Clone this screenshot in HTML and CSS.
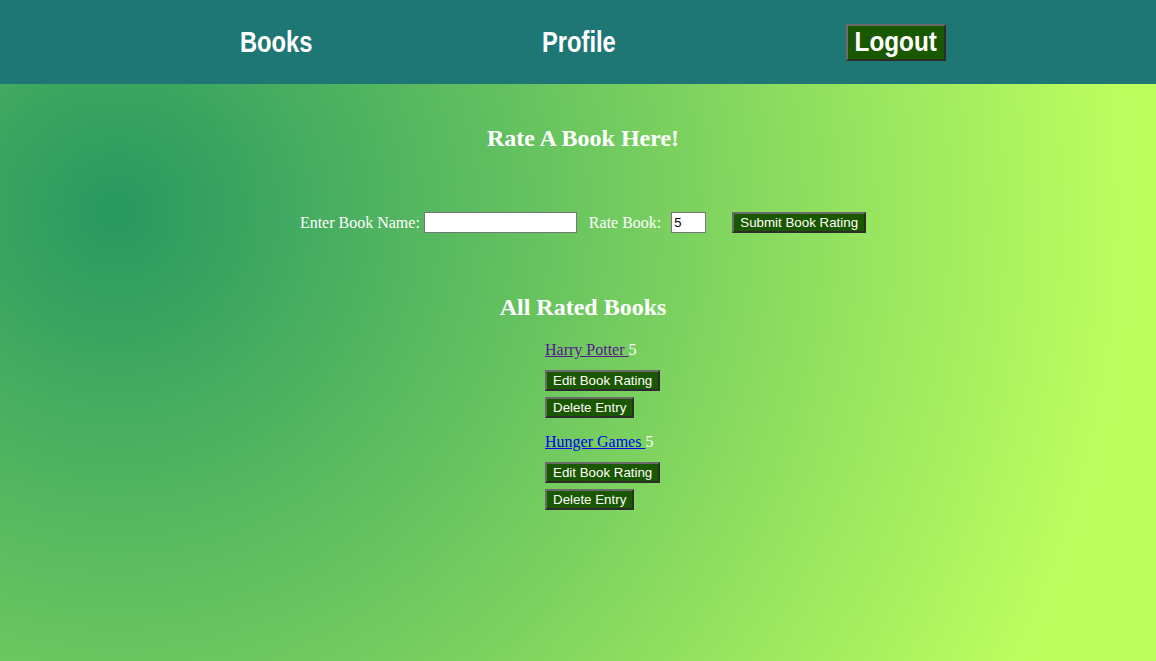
FILE: index.html
```html
<!DOCTYPE html>
<html>
<head>
<meta charset="utf-8">
<title>Rate Books</title>
<link rel="stylesheet" href="styles.css">
</head>
<body>
<header class="topbar">
  <nav class="nav">
    <a class="nav-link" href="#"><span class="cond">Books</span></a>
    <a class="nav-link" href="#"><span class="cond">Profile</span></a>
    <div class="nav-cell"><button class="logout"><span class="cond-sm">Logout</span></button></div>
  </nav>
</header>
<main class="main">
  <h2 class="title">Rate A Book Here!</h2>
  <form class="rate-form">
    <label class="lbl">Enter Book Name: <input class="name-input" type="text"></label>
    <label class="lbl rate-lbl">Rate Book: <input class="rate-input" type="text" value="5"></label>
    <button class="btn submit" type="button">Submit Book Rating</button>
  </form>
  <h2 class="title list-title">All Rated Books</h2>
  <div class="book-list">
    <div class="book">
      <p class="book-line"><a class="visited" href="#">Harry Potter </a>5</p>
      <div class="actions">
        <button class="btn">Edit Book Rating</button>
        <button class="btn">Delete Entry</button>
      </div>
    </div>
    <div class="book">
      <p class="book-line"><a class="unvisited" href="#">Hunger Games </a>5</p>
      <div class="actions">
        <button class="btn">Edit Book Rating</button>
        <button class="btn">Delete Entry</button>
      </div>
    </div>
  </div>
</main>
</body>
</html>
```
FILE: styles.css
```css
html, body {
  margin: 0;
  padding: 0;
  height: 100%;
}
body {
  font-family: "Liberation Serif", "Times New Roman", serif;
  font-size: 16px;
  color: #fff;
  display: flex;
  flex-direction: column;
  background: #62c35f;
}
.topbar {
  background: #1e7774;
  height: 84px;
  flex: none;
}
.nav {
  display: grid;
  grid-template-columns: 302px 304px 304px;
  padding-left: 240px;
  height: 100%;
  align-items: center;
}
.nav-link {
  color: #fff;
  text-decoration: none;
  font-family: "Liberation Sans", Arial, sans-serif;
  font-weight: bold;
  font-size: 30px;
}
.cond {
  display: inline-block;
  transform: scaleX(0.79);
  transform-origin: left center;
}
.nav-cell {
  display: flex;
  align-items: center;
}
.logout {
  background: #1a5800;
  color: #fff;
  font-family: "Liberation Sans", Arial, sans-serif;
  font-weight: bold;
  font-size: 27px;
  border: 2px solid;
  border-color: #6a6a6a #2c2c2c #2c2c2c #6a6a6a;
  width: 100px;
  height: 37px;
  padding: 0;
  display: flex;
  align-items: center;
  justify-content: center;
  margin-top: 1px;
}
.cond-sm {
  display: inline-block;
  transform: scaleX(0.9);
  line-height: 1;
}
.main {
  flex: 1;
  background: radial-gradient(circle at 10% 22%, rgb(40, 152, 96) 0%, rgb(190, 255, 95) 90%);
  padding: 40px 0 0 10px;
  text-align: center;
}
.title {
  font-size: 24px;
  font-weight: bold;
  margin: 0;
  line-height: 28px;
}
.rate-form {
  margin-top: 60px;
  display: flex;
  justify-content: center;
  align-items: center;
  height: 21px;
}
.lbl {
  display: flex;
  align-items: center;
  white-space: pre;
}
.rate-lbl {
  margin-left: 12px;
}
.name-input, .rate-input {
  box-sizing: border-box;
  height: 21px;
  border: 1px solid #767676;
  background: #fff;
  font-family: "Liberation Sans", Arial, sans-serif;
  font-size: 13px;
  padding: 1px 2px;
  margin: 0;
}
.name-input {
  width: 153px;
}
.rate-input {
  width: 35px;
  margin-left: 6px;
}
.submit {
  margin-left: 26px;
}
.btn {
  box-sizing: border-box;
  height: 21px;
  background: #1a5800;
  color: #fff;
  font-family: "Liberation Sans", Arial, sans-serif;
  font-size: 13.33px;
  padding: 0 6px;
  border: 2px solid;
  border-color: #6a6a6a #2c2c2c #2c2c2c #6a6a6a;
  line-height: 15px;
}
.list-title {
  margin-top: 60px;
}
.book-list {
  margin-top: 20px;
  margin-left: calc(50% - 38px);
  display: flex;
  flex-direction: column;
  gap: 15px;
  text-align: left;
}
.book-line {
  margin: 0;
  line-height: 18px;
}
.visited { color: #551a8b; }
.unvisited { color: #0000ee; }
.actions {
  margin-top: 11px;
  display: flex;
  flex-direction: column;
  align-items: flex-start;
  gap: 6px;
}
```
